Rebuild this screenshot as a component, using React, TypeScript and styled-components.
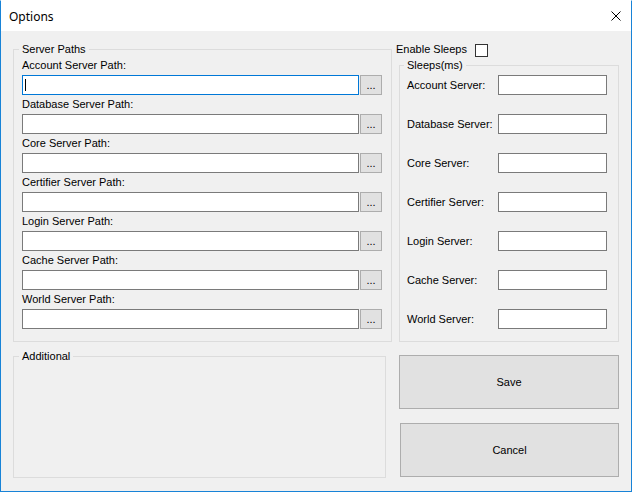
import React from 'react';
import styled, { createGlobalStyle } from 'styled-components';

const GlobalStyle = createGlobalStyle`
  html, body {
    margin: 0;
    padding: 0;
    background: #ffffff;
  }
  body {
    font-family: 'Liberation Sans', Arial, sans-serif;
    font-size: 11px;
    color: #000000;
  }
  * {
    box-sizing: border-box;
  }
`;

const Window = styled.div`
  width: 632px;
  height: 492px;
  border: 1px solid #1883d7;
  border-top-color: #ffffff;
  background: #f0f0f0;
  display: flex;
  flex-direction: column;
  overflow: hidden;
`;

const TitleBar = styled.div`
  height: 30px;
  flex-shrink: 0;
  background: #ffffff;
  display: flex;
  align-items: center;
  justify-content: space-between;
  padding: 0 10px 0 8px;
`;

const Title = styled.span`
  font-family: 'Noto Sans', 'Open Sans', sans-serif;
  font-size: 12px;
`;

const Client = styled.div`
  padding: 12px 12px 0 12px;
  display: flex;
  flex-direction: column;
`;

const Row = styled.div<{ $gap?: number }>`
  display: flex;
  align-items: flex-start;
  margin-top: ${(p) => p.$gap ?? 0}px;
`;

const Group = styled.fieldset<{ $width: number; $height?: number; $pad?: string }>`
  margin: 0;
  width: ${(p) => p.$width}px;
  ${(p) => (p.$height ? `height: ${p.$height}px;` : '')}
  border: 1px solid #dcdcdc;
  padding: ${(p) => p.$pad ?? '3px 9px 12px 8px'};
  min-width: 0;

  legend {
    margin-left: -3px;
    padding: 0 3px;
    line-height: 13px;
    font-size: 11px;
  }
`;

const PathList = styled.div`
  display: flex;
  flex-direction: column;
  gap: 3px;
`;

const PathRow = styled.div`
  display: flex;
  flex-direction: column;
`;

const FieldLabel = styled.label`
  line-height: 13px;
  margin-bottom: 3px;
`;

const InputLine = styled.div`
  display: flex;
  gap: 1px;
`;

const TextBox = styled.input<{ $width: number; $focused?: boolean }>`
  width: ${(p) => p.$width}px;
  height: 20px;
  margin: 0;
  padding: 0 2px;
  border: 1px solid ${(p) => (p.$focused ? '#0078d7' : '#7a7a7a')};
  background: #ffffff;
  ${(p) =>
    p.$focused
      ? `background-image: linear-gradient(#000, #000);
         background-repeat: no-repeat;
         background-position: 2px 3px;
         background-size: 1px 12px;`
      : ''}
  font-family: inherit;
  font-size: 11px;
  outline: none;
`;

const BrowseButton = styled.button`
  width: 22px;
  height: 20px;
  margin: 0;
  padding: 0;
  border: 1px solid #adadad;
  background: #e1e1e1;
  font-family: inherit;
  font-size: 11px;
  line-height: 18px;
  color: #000;
`;

const RightColumn = styled.div`
  margin-left: 4px;
  width: 222px;
  display: flex;
  flex-direction: column;
`;

const EnableRow = styled.div`
  display: flex;
  align-items: center;
  height: 13px;
  margin-bottom: 3px;
  line-height: 13px;
`;

const CheckBox = styled.span`
  width: 13px;
  height: 13px;
  margin-left: 8px;
  margin-top: 2px;
  border: 1px solid #333333;
  background: #ffffff;
`;

const SleepGroup = styled(Group)`
  margin-left: 3px;
`;

const SleepGrid = styled.div`
  display: grid;
  grid-template-columns: 91px 109px;
  row-gap: 19px;
  align-items: center;
`;

const SleepLabel = styled.span`
  line-height: 13px;
`;

const ButtonColumn = styled.div`
  margin-left: 13px;
  margin-top: 5px;
  display: flex;
  flex-direction: column;
  align-items: flex-end;
  gap: 14px;
`;

const DialogButton = styled.button<{ $width: number }>`
  width: ${(p) => p.$width}px;
  height: 54px;
  margin: 0;
  border: 1px solid #adadad;
  background: #e1e1e1;
  font-family: inherit;
  font-size: 11px;
  color: #000;
`;

const servers = ['Account', 'Database', 'Core', 'Certifier', 'Login', 'Cache', 'World'];

function App(): JSX.Element {
  return (
    <>
      <GlobalStyle />
      <Window>
        <TitleBar>
          <Title>Options</Title>
          <svg width='10' height='10' viewBox='0 0 10 10'>
            <path d='M0.5 0.5 L9.5 9.5 M9.5 0.5 L0.5 9.5' stroke='#000' strokeWidth='1' fill='none' />
          </svg>
        </TitleBar>
        <Client>
          <Row>
            <Group $width={379}>
              <legend>Server Paths</legend>
              <PathList>
                {servers.map((name, i) => (
                  <PathRow key={name}>
                    <FieldLabel>{name} Server Path:</FieldLabel>
                    <InputLine>
                      <TextBox $width={337} $focused={i === 0} />
                      <BrowseButton>...</BrowseButton>
                    </InputLine>
                  </PathRow>
                ))}
              </PathList>
            </Group>
            <RightColumn>
              <EnableRow>
                <span>Enable Sleeps</span>
                <CheckBox />
              </EnableRow>
              <SleepGroup $width={220} $pad='3px 11px 12px 7px'>
                <legend>Sleeps(ms)</legend>
                <SleepGrid>
                  {servers.map((name) => (
                    <React.Fragment key={name}>
                      <SleepLabel>{name} Server:</SleepLabel>
                      <TextBox $width={109} />
                    </React.Fragment>
                  ))}
                </SleepGrid>
              </SleepGroup>
            </RightColumn>
          </Row>
          <Row $gap={8}>
            <Group $width={373} $height={128}>
              <legend>Additional</legend>
            </Group>
            <ButtonColumn>
              <DialogButton $width={220}>Save</DialogButton>
              <DialogButton $width={219}>Cancel</DialogButton>
            </ButtonColumn>
          </Row>
        </Client>
      </Window>
    </>
  );
}

export default App;
